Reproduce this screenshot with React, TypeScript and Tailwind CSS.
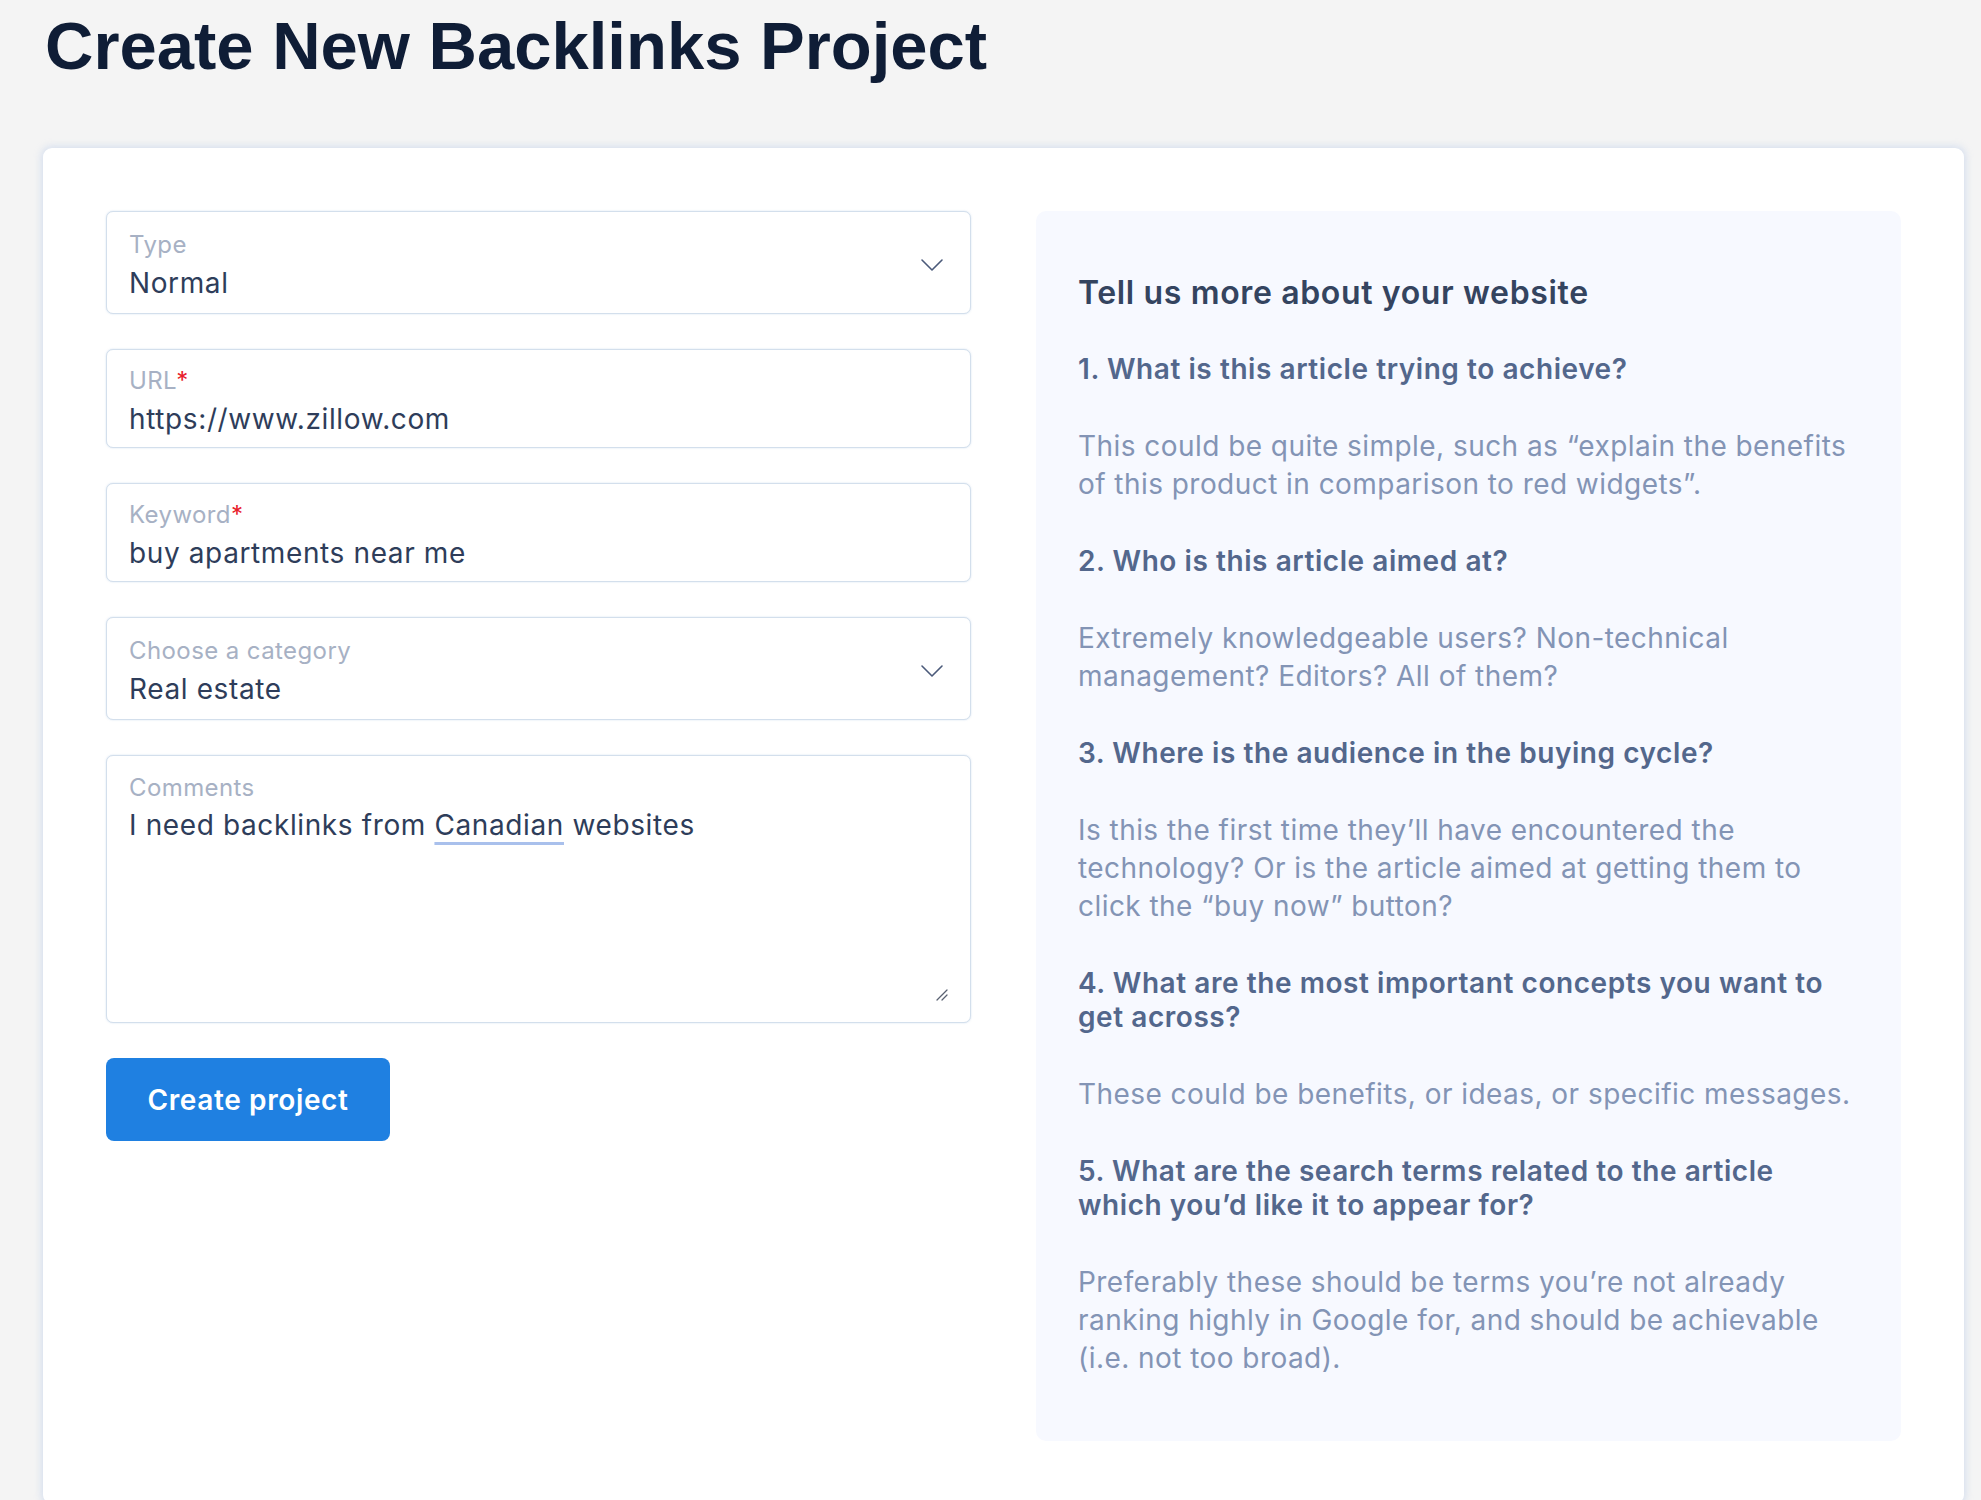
import React from "react";

const Chevron = () => (
  <svg width="24" height="14" viewBox="0 0 24 14" fill="none" className="shrink-0">
    <path d="M2 2l10 10L22 2" stroke="#4b5a7a" strokeWidth="1.6" strokeLinecap="round" strokeLinejoin="round" />
  </svg>
);

interface FieldProps {
  label: string;
  value: React.ReactNode;
  required?: boolean;
  select?: boolean;
}

const Field: React.FC<FieldProps> = ({ label, value, required, select }) => {
  return (
    <div
      className={`flex items-center rounded-[7px] border border-[#d3dfec] bg-white pl-[22px] pr-[26px] pt-[4px] shadow-[0_0_2px_rgba(190,210,232,0.7)] ${
        select ? "h-[103px]" : "h-[99px]"
      }`}
    >
      <div className="flex flex-1 flex-col">
        <span className="text-[24px] leading-[30px] tracking-[0.017em] text-[#a7b1c4]">
          {label}
          {required && <span className="text-[#e8202a]">*</span>}
        </span>
        <span className="mt-[6px] text-[28px] leading-[34px] tracking-[0.022em] text-[#2e3d5a]">{value}</span>
      </div>
      {select && <Chevron />}
    </div>
  );
};

const tips = [
  {
    q: "1. What is this article trying to achieve?",
    a: "This could be quite simple, such as \u201Cexplain the benefits of this product in comparison to red widgets\u201D.",
  },
  {
    q: "2. Who is this article aimed at?",
    a: "Extremely knowledgeable users? Non-technical management? Editors? All of them?",
  },
  {
    q: "3. Where is the audience in the buying cycle?",
    a: "Is this the first time they\u2019ll have encountered the technology? Or is the article aimed at getting them to click the \u201Cbuy now\u201D button?",
  },
  {
    q: "4. What are the most important concepts you want to get across?",
    a: "These could be benefits, or ideas, or specific messages.",
  },
  {
    q: "5. What are the search terms related to the article which you\u2019d like it to appear for?",
    a: "Preferably these should be terms you\u2019re not already ranking highly in Google for, and should be achievable (i.e. not too broad).",
  },
];

export default function App() {
  return (
    <div className="min-h-screen bg-[#f4f4f4] pl-[43px] pr-[17px] font-['Inter',sans-serif]">
      {/* Page title */}
      <h1 className="pl-[2px] pt-[12px] pb-[69px] font-['Liberation_Sans',Arial,sans-serif] text-[67px] font-bold leading-[67px] text-[#0f1d36]">
        Create New Backlinks Project
      </h1>

      {/* Card */}
      <div className="grid grid-cols-2 gap-[65px] rounded-[9px] bg-white p-[63px] shadow-[0_0_7px_2px_rgba(205,218,238,0.75)]">
        {/* Form */}
        <div className="flex flex-col gap-[35px]">
          <Field label="Type" value="Normal" select />
          <Field label="URL" value="https://www.zillow.com" required />
          <Field label="Keyword" value="buy apartments near me" required />
          <Field label="Choose a category" value="Real estate" select />

          <div className="relative h-[268px] rounded-[7px] border border-[#d3dfec] bg-white pl-[22px] pt-[17px] shadow-[0_0_2px_rgba(190,210,232,0.7)]">
            <div className="text-[24px] leading-[30px] tracking-[0.017em] text-[#a7b1c4]">Comments</div>
            <div className="mt-[5px] text-[28px] leading-[34px] tracking-[0.022em] text-[#2e3d5a]">
              I need backlinks from{" "}
              <span className="underline decoration-[#a9c0ec] decoration-[3px] underline-offset-[7px]">Canadian</span>{" "}
              websites
            </div>
            {/* resize grip */}
            <svg width="14" height="14" viewBox="0 0 14 14" className="absolute bottom-[21px] right-[22px]">
              <path d="M13 3L3 13M13 8L8 13" stroke="#5a6272" strokeWidth="1.3" strokeLinecap="round" />
            </svg>
          </div>

          <button className="h-[83px] w-[284px] rounded-[8px] bg-[#1f80e1] text-[28px] font-semibold tracking-[0.022em] text-white">
            Create project
          </button>
        </div>

        {/* Tips panel */}
        <div className="flex flex-col gap-[41px] rounded-[10px] bg-[#f7f9ff] pl-[42px] pr-[36px] py-[64px]">
          <h2 className="text-[32px] font-semibold leading-[36px] tracking-[0.02em] text-[#34445f]">
            Tell us more about your website
          </h2>
          {tips.map((t) => (
            <React.Fragment key={t.q}>
              <h3 className="text-[28px] font-semibold leading-[34px] tracking-[0.02em] text-[#53678c]">{t.q}</h3>
              <p className="text-[28px] leading-[38px] tracking-[0.016em] text-[#8394b5]">{t.a}</p>
            </React.Fragment>
          ))}
        </div>
      </div>
    </div>
  );
}
